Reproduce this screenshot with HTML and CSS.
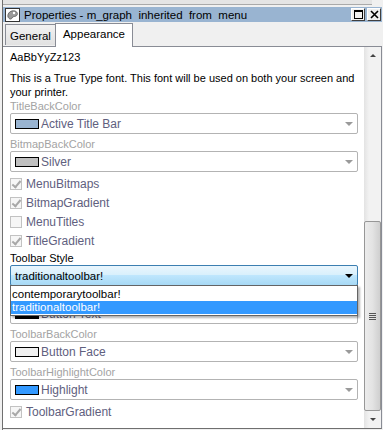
FILE: index.html
```html
<!DOCTYPE html>
<html lang="en">
<head>
    <meta charset="UTF-8">
    <title>Properties - m_graph inherited from menu</title>
    <link rel="stylesheet" href="styles.css">
</head>
<body>
    <div class="window">
        <div class="top-strip"></div>
        <div class="titlebar">
            <svg class="app-icon" width="15" height="14" viewBox="0 0 15 14">
                <rect x="0.5" y="0.5" width="14" height="13" fill="#fff" stroke="#333"/>
                <path d="M3 9 C2 5 6 2 10 3 C13 4 13 7 11 8 C9 9 8 8 7 10 C6 12 4 11 3 9 Z" fill="#9a9a9a" stroke="#555" stroke-width="0.8"/>
                <circle cx="9" cy="5" r="1.2" fill="#fff"/>
            </svg>
            <span class="title">Properties - m_graph  inherited  from  menu</span>
            <div class="caption-buttons">
                <span class="cap-btn">
                    <svg width="9" height="9" viewBox="0 0 9 9"><rect x="0.5" y="0.5" width="8" height="8" fill="none" stroke="#000"/><rect x="0" y="0" width="9" height="2" fill="#000"/></svg>
                </span>
                <span class="cap-btn">
                    <svg width="9" height="9" viewBox="0 0 9 9"><path d="M1 1 L8 8 M8 1 L1 8" stroke="#000" stroke-width="1.6"/></svg>
                </span>
            </div>
        </div>

        <div class="tabs">
            <div class="tab">General</div>
            <div class="tab active">Appearance</div>
        </div>

        <div class="panel">
            <div class="content">
                <div class="sample">AaBbYyZz123</div>
                <p class="font-note">This is a True Type font. This font will be used on both your screen and your printer.</p>

                <div class="field-label">TitleBackColor</div>
                <div class="combo">
                    <span class="swatch" style="background:#99b4d1"></span>
                    <span class="combo-text">Active Title Bar</span>
                    <span class="arrow"></span>
                </div>

                <div class="field-label">BitmapBackColor</div>
                <div class="combo">
                    <span class="swatch" style="background:#c0c0c0"></span>
                    <span class="combo-text">Silver</span>
                    <span class="arrow"></span>
                </div>

                <div class="checks">
                    <div class="check-row"><span class="checkbox checked"></span>MenuBitmaps</div>
                    <div class="check-row"><span class="checkbox checked"></span>BitmapGradient</div>
                    <div class="check-row"><span class="checkbox"></span>MenuTitles</div>
                    <div class="check-row"><span class="checkbox checked"></span>TitleGradient</div>
                </div>

                <div class="field-label active-label">Toolbar Style</div>
                <div class="style-wrap">
                    <div class="combo combo-open">
                        <span class="combo-text">traditionaltoolbar!</span>
                        <span class="arrow dark"></span>
                    </div>
                    <div class="dropdown-list">
                        <div class="list-item">contemporarytoolbar!</div>
                        <div class="list-item selected">traditionaltoolbar!</div>
                    </div>
                </div>

                <div class="field-label">ToolbarTextColor</div>
                <div class="combo">
                    <span class="swatch" style="background:#000"></span>
                    <span class="combo-text">Button Text</span>
                    <span class="arrow"></span>
                </div>

                <div class="field-label">ToolbarBackColor</div>
                <div class="combo">
                    <span class="swatch" style="background:#f0f0f0"></span>
                    <span class="combo-text">Button Face</span>
                    <span class="arrow"></span>
                </div>

                <div class="field-label">ToolbarHighlightColor</div>
                <div class="combo">
                    <span class="swatch" style="background:#3399ff"></span>
                    <span class="combo-text">Highlight</span>
                    <span class="arrow"></span>
                </div>

                <div class="checks">
                    <div class="check-row"><span class="checkbox checked"></span>ToolbarGradient</div>
                </div>
            </div>

            <div class="scrollbar">
                <div class="sb-btn"><span class="sb-arrow up"></span></div>
                <div class="sb-track">
                    <div class="sb-thumb"><span class="grip"></span></div>
                </div>
                <div class="sb-btn"><span class="sb-arrow down"></span></div>
            </div>
        </div>
    </div>
</body>
</html>
```

FILE: styles.css
```css
body {
    margin: 0;
    background-color: #f0f0f0;
    font-family: "Liberation Sans", Arial, sans-serif;
    font-size: 11px;
    color: #000;
    overflow: hidden;
}
.window {
    margin-left: 2px;
    width: 379px;
    height: 430px;
    border-left: 1px solid #6f6f6f;
    display: flex;
    flex-direction: column;
}
.top-strip {
    height: 4px;
    width: 369px;
    border-bottom: 1px solid #a9a9a9;
    background: #e4e4e4;
}
.titlebar {
    margin-top: 2px;
    height: 15px;
    background-color: #99b4d1;
    display: flex;
    align-items: center;
    padding-left: 2px;
}
.app-icon {
    margin-right: 4px;
    flex: none;
}
.title {
    white-space: pre;
    font-size: 11.5px;
    flex: 1;
}
.caption-buttons {
    display: flex;
    gap: 2px;
    margin-right: 1px;
    align-self: stretch;
    padding-top: 1px;
}
.cap-btn {
    width: 14px;
    height: 13px;
    box-sizing: border-box;
    background: #f0f0f0;
    border: 1px solid;
    border-color: #fff #404040 #404040 #fff;
    display: flex;
    align-items: center;
    justify-content: center;
}
.tabs {
    display: flex;
    align-items: flex-end;
    height: 24px;
    padding-left: 2px;
    font-size: 11.5px;
}
.tab {
    height: 21px;
    box-sizing: border-box;
    padding: 5px 4px 0 4px;
    border: 1px solid #898c95;
    border-bottom: none;
    background: linear-gradient(#f2f2f2, #e1e1e1);
    margin-bottom: 1px;
}
.tab.active {
    height: 24px;
    padding: 4px 7px 0 7px;
    background: #fff;
    margin-bottom: -1px;
    margin-left: -1px;
    position: relative;
    z-index: 1;
}
.panel {
    flex: 1;
    display: flex;
    background: #fff;
    border: 1px solid #898c95;
    border-left: none;
    border-bottom-color: #6f6f6f;
    margin-bottom: 1px;
}
.content {
    flex: 1;
    padding: 3px 5px 0 7px;
    min-width: 0;
}
.sample {
    line-height: 14px;
    margin-bottom: 7px;
}
.font-note {
    margin: 0;
    line-height: 14px;
}
.field-label {
    color: #a3a3a3;
    line-height: 14px;
    height: 14px;
    margin-top: 3px;
}
.font-note + .field-label {
    margin-top: 0;
}
.active-label {
    color: #000;
    margin-top: 1px;
}
.combo {
    height: 21px;
    box-sizing: border-box;
    border: 1px solid #b3b3b3;
    border-radius: 2px;
    display: flex;
    align-items: center;
    padding-left: 4px;
    color: #60607e;
    background: #fff;
    font-size: 12px;
}
.swatch {
    width: 24px;
    height: 10px;
    box-sizing: border-box;
    border: 1px solid #000;
    margin-right: 2px;
    flex: none;
}
.combo-text {
    flex: 1;
}
.arrow {
    width: 0;
    height: 0;
    border-left: 4px solid transparent;
    border-right: 4px solid transparent;
    border-top: 4px solid #9a9a9a;
    margin-right: 4px;
}
.arrow.dark {
    border-top-color: #000;
}
.checks {
    margin-top: 2px;
}
.check-row {
    height: 19px;
    display: flex;
    align-items: center;
    color: #60607e;
    font-size: 12px;
}
.checkbox {
    width: 12px;
    height: 12px;
    box-sizing: border-box;
    border: 1px solid #c2c2c2;
    background: #f6f6f6;
    margin-right: 4px;
    position: relative;
}
.checkbox.checked::after {
    content: "";
    position: absolute;
    left: 3px;
    top: 0px;
    width: 3px;
    height: 7px;
    border: solid #a8a8a8;
    border-width: 0 2px 2px 0;
    transform: rotate(40deg);
}
.style-wrap {
    position: relative;
}
.combo-open {
    border-color: #3c7fb1;
    background: linear-gradient(#eaf6fd 0%, #d9f0fc 45%, #bee6fd 50%, #a7d9f5 100%);
    color: #000;
    font-size: 11.5px;
}
.dropdown-list {
    position: absolute;
    left: 0;
    right: 0;
    top: 20px;
    border: 1px solid #646464;
    background: #fff;
    box-shadow: 2px 2px 2px rgba(0, 0, 0, 0.3);
    z-index: 2;
    padding: 2px 0 1px;
    font-size: 11.5px;
}
.list-item {
    height: 13px;
    line-height: 13px;
    padding-left: 1px;
}
.list-item.selected {
    background: #3399ff;
    color: #fff;
}
.scrollbar {
    width: 17px;
    margin-left: 1px;
    display: flex;
    flex-direction: column;
    background: linear-gradient(90deg, #e3e3e3, #f2f2f2 30%, #f2f2f2);
}
.sb-btn {
    height: 17px;
    display: flex;
    align-items: center;
    justify-content: center;
}
.sb-arrow {
    width: 0;
    height: 0;
    border-left: 3px solid transparent;
    border-right: 3px solid transparent;
}
.sb-arrow.up {
    border-bottom: 3px solid #444;
}
.sb-arrow.down {
    border-top: 3px solid #444;
}
.sb-track {
    flex: 1;
    display: flex;
    flex-direction: column;
    justify-content: flex-end;
}
.sb-thumb {
    height: 190px;
    box-sizing: border-box;
    border: 1px solid #979797;
    border-radius: 2px;
    background: linear-gradient(90deg, #ececec, #e3e3e3 50%, #cfcfcf);
    display: flex;
    align-items: center;
    justify-content: center;
}
.grip {
    width: 7px;
    height: 7px;
    background: repeating-linear-gradient(#555 0 1px, transparent 1px 2px);
}
```
